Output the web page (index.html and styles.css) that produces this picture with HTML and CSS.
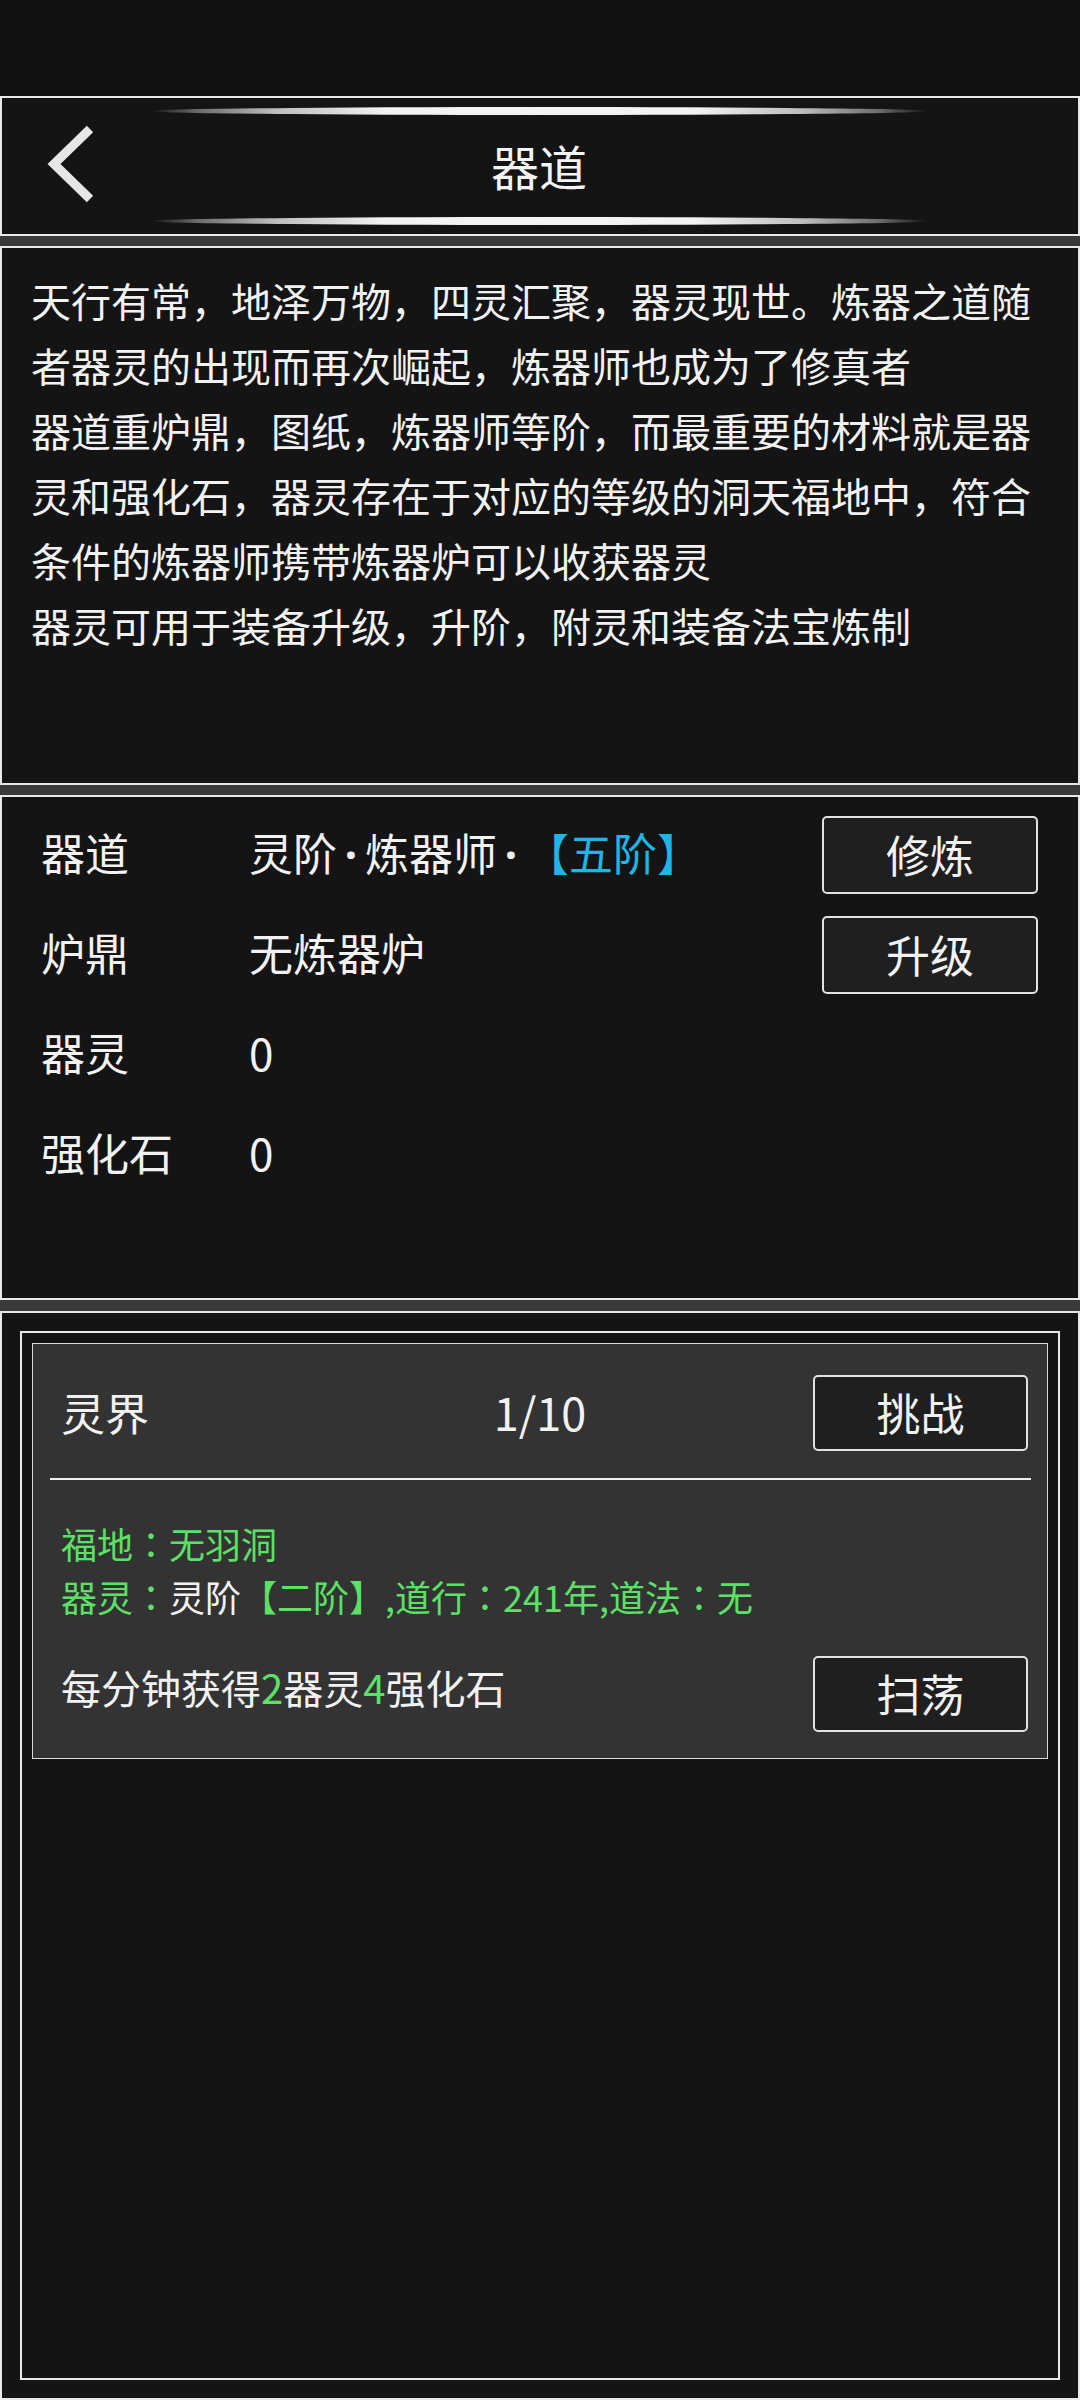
FILE: index.html
```html
<!DOCTYPE html>
<html lang="zh-CN">
<head>
<meta charset="utf-8">
<title>器道</title>
<link rel="stylesheet" href="styles.css">
</head>
<body>
<div class="topbar"></div>
<header class="panel header">
  <div class="back">
    <svg width="148" height="136" viewBox="0 0 148 136">
      <polyline points="88,31 52,66 88,101" fill="none" stroke="#e6e6e6" stroke-width="9" stroke-linejoin="miter" stroke-linecap="butt"/>
    </svg>
  </div>
  <div class="title-col">
    <div class="deco"></div>
    <h1 class="title">器道</h1>
    <div class="deco"></div>
  </div>
  <div></div>
</header>
<div class="sep"></div>
<section class="panel desc">
  <p>天行有常，地泽万物，四灵汇聚，器灵现世。炼器之道随者器灵的出现而再次崛起，炼器师也成为了修真者</p>
  <p>器道重炉鼎，图纸，炼器师等阶，而最重要的材料就是器灵和强化石，器灵存在于对应的等级的洞天福地中，符合条件的炼器师携带炼器炉可以收获器灵</p>
  <p>器灵可用于装备升级，升阶，附灵和装备法宝炼制</p>
</section>
<div class="sep"></div>
<section class="panel stats">
  <div class="stat-row">
    <span class="label">器道</span>
    <span class="value">灵阶<span class="dot">·</span>炼器师<span class="dot">·</span><span class="cyan">【五阶】</span></span>
    <div class="btn">修炼</div>
  </div>
  <div class="stat-row">
    <span class="label">炉鼎</span>
    <span class="value">无炼器炉</span>
    <div class="btn">升级</div>
  </div>
  <div class="stat-row">
    <span class="label">器灵</span>
    <span class="value">0</span>
  </div>
  <div class="stat-row">
    <span class="label">强化石</span>
    <span class="value">0</span>
  </div>
</section>
<div class="sep sep-wide"></div>
<section class="panel realm">
  <div class="frame">
    <div class="card">
      <div class="card-top">
        <span class="card-label">灵界</span>
        <span class="count">1/10</span>
        <div class="btn btn-card">挑战</div>
      </div>
      <div class="card-rule"></div>
      <div class="info">
        <div>福地<span class="colon" lang="zh-TW">：</span>无羽洞</div>
        <div>器灵<span class="colon" lang="zh-TW">：</span><span class="white">灵阶</span>【二阶】,道行<span class="colon" lang="zh-TW">：</span>241年,道法<span class="colon" lang="zh-TW">：</span>无</div>
      </div>
      <div class="card-bottom">
        <span class="gain">每分钟获得<span class="green">2</span>器灵<span class="green">4</span>强化石</span>
        <div class="btn btn-card">扫荡</div>
      </div>
    </div>
  </div>
</section>
</body>
</html>
```
FILE: styles.css
```css
* {
  box-sizing: border-box;
  margin: 0;
  padding: 0;
}

html, body {
  background: #111111;
}

body {
  width: 1080px;
  height: 2400px;
  overflow: hidden;
  font-family: "Noto Sans CJK SC", "Noto Sans", sans-serif;
  color: #f2f2f2;
}

.topbar {
  height: 96px;
  background: #111111;
}

.panel {
  border: 2px solid #e8e8e8;
  background: #141414;
}

.sep {
  height: 10px;
  background: #3a3a3a;
}

.sep-wide {
  height: 11px;
}

/* Header */
.header {
  height: 140px;
  display: grid;
  grid-template-columns: 148px 778px 1fr;
}

.back {
  display: flex;
  align-items: center;
}

.title-col {
  display: flex;
  flex-direction: column;
  padding: 9px 0;
}

.deco {
  height: 8px;
  border-radius: 50%;
  background: linear-gradient(to right,
    rgba(110, 110, 110, 0) 0%,
    #6a6a6a 6%,
    #bdbdbd 16%,
    #f2f2f2 30%,
    #f4f4f4 50%,
    #f2f2f2 70%,
    #bdbdbd 84%,
    #6a6a6a 94%,
    rgba(110, 110, 110, 0) 100%);
}

.title {
  flex: 1;
  display: flex;
  align-items: center;
  justify-content: center;
  padding-bottom: 2px;
  font-size: 48px;
  font-weight: 400;
  color: #f4f4f4;
}

/* Description */
.desc {
  height: 539px;
  padding: 20px 30px 0 29px;
  font-size: 40px;
  line-height: 65px;
  color: #f2f2f2;
}

/* Stats */
.stats {
  height: 505px;
  padding: 8px 40px 0 39px;
}

.stat-row {
  display: grid;
  grid-template-columns: 208px 1fr 216px;
  align-items: center;
  height: 100px;
  font-size: 44px;
}

.label,
.value {
  padding-bottom: 7px;
}

.dot {
  display: inline-block;
  width: 28px;
  text-align: center;
  font-family: "Noto Sans", "DejaVu Sans", sans-serif;
  font-weight: 700;
}

.cyan {
  color: #1eb6e8;
}

.btn {
  width: 216px;
  height: 78px;
  border: 2px solid #e2e2e2;
  border-radius: 5px;
  background: #1f1f1f;
  display: flex;
  align-items: center;
  justify-content: center;
  padding-bottom: 2px;
  font-size: 44px;
  color: #f2f2f2;
}

/* Realm */
.realm {
  height: 1089px;
  padding: 18px;
}

.frame {
  height: 100%;
  border: 2px solid #e8e8e8;
  padding: 10px;
}

.card {
  height: 416px;
  border: 1.5px solid #d8d8d8;
  background: #333333;
  padding: 0 19px 0 28px;
}

.card-top {
  display: grid;
  grid-template-columns: 1fr auto 1fr;
  align-items: center;
  padding: 31px 0 27px 0;
  margin-left: -9px;
}

.card-label {
  padding-left: 9px;
  padding-bottom: 3px;
  font-size: 44px;
}

.count {
  padding-bottom: 3px;
  font-size: 45px;
}

.btn-card {
  justify-self: end;
  width: 215px;
  height: 76px;
}

.card-rule {
  height: 2px;
  background: #eeeeee;
  margin: 0 -2.5px 0 -11.5px;
}

.info {
  margin-top: 37px;
  font-size: 36px;
  line-height: 53px;
  color: #5ce066;
}

.colon {
  font-family: "Noto Sans CJK TC", "Noto Sans CJK SC", sans-serif;
}

.white {
  color: #f2f2f2;
}

.green {
  color: #5ce066;
}

.card-bottom {
  display: flex;
  justify-content: space-between;
  align-items: center;
  margin-top: 33px;
}

.gain {
  padding-bottom: 14px;
  font-size: 40px;
}
```
